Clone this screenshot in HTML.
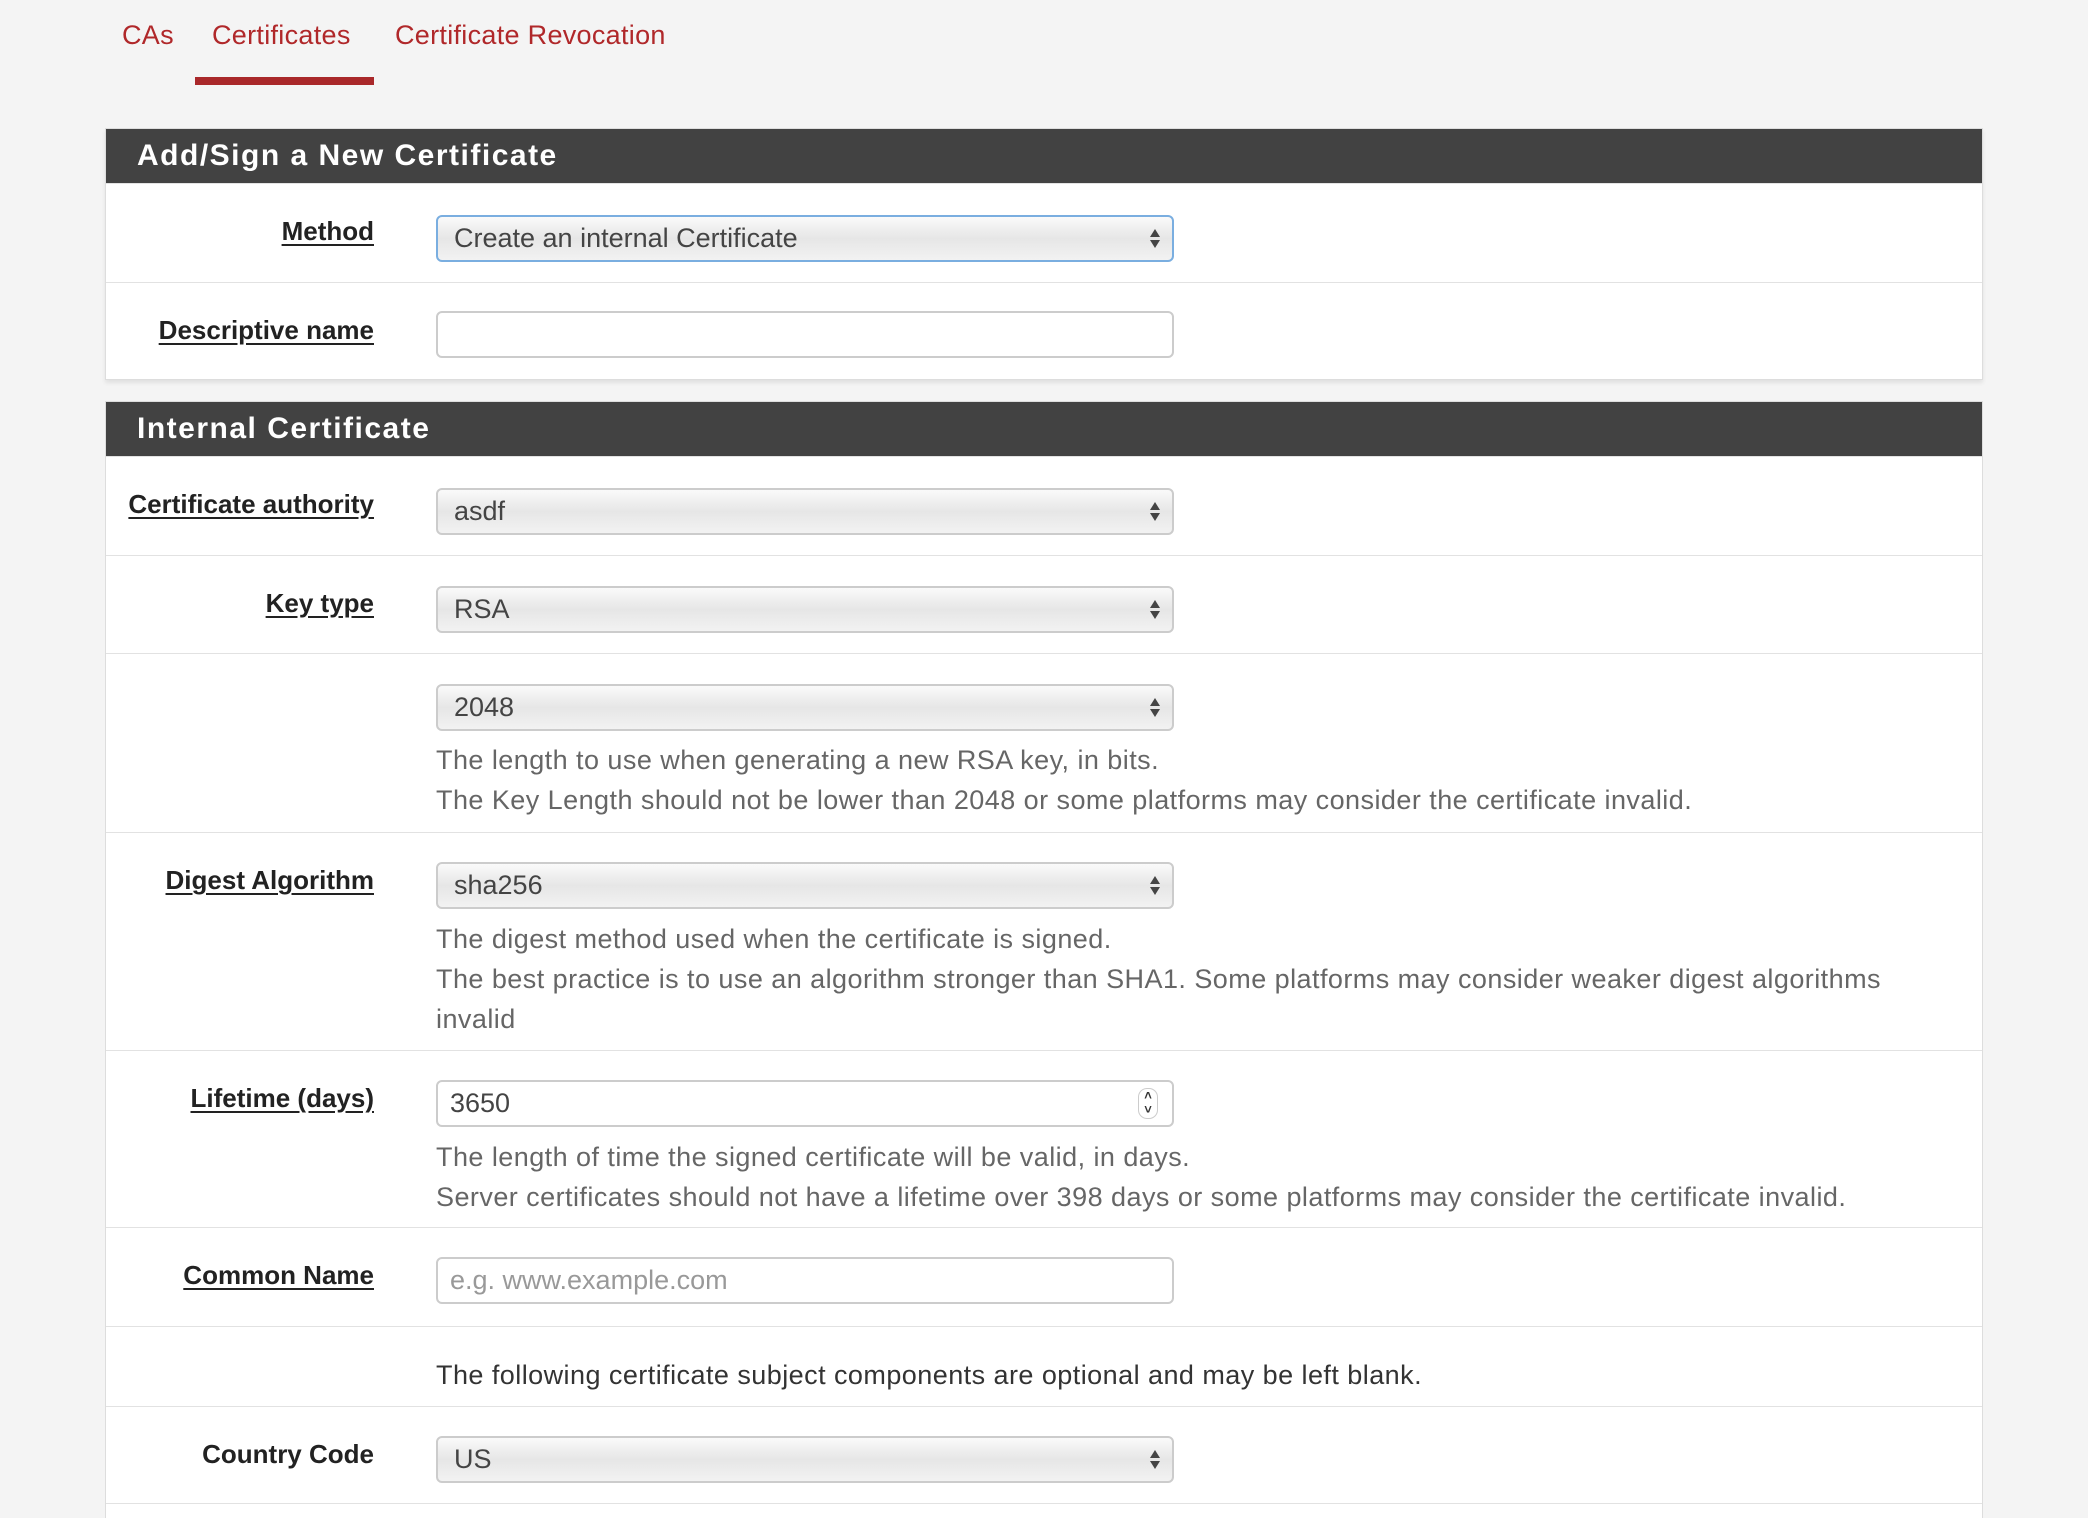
<!DOCTYPE html>
<html><head><meta charset="utf-8"><style>
*{box-sizing:border-box;margin:0;padding:0}
html{width:2088px;height:1518px;overflow:hidden}
body{width:2088px;height:1518px;background:#f4f4f4;font-family:"Liberation Sans",sans-serif;color:#333;position:relative;overflow:hidden}
.tab{position:absolute;top:20px;font-size:27px;letter-spacing:0.3px;color:#b0282a}
.ul{position:absolute;left:195px;top:77px;width:179px;height:8px;background:#a9282a}
.panel{position:absolute;left:105px;width:1878px;background:#fff;border:1px solid #ddd;overflow:hidden}
.hdr{background:#424242;color:#fff;font-weight:bold;font-size:30px;letter-spacing:1.5px;padding-left:31px;height:54px;line-height:54px}
.row{position:relative;border-top:1px solid #e2e2e2}
.row:first-of-type{border-top:none}
.lbl{position:absolute;right:1608px;font-size:26px;font-weight:bold;color:#222;text-decoration:underline;text-underline-offset:4px}
.nu{text-decoration:none}
.sel,.inp{position:absolute;left:330px;width:738px;height:47px;border:2px solid #ccc;border-radius:6px;font-size:27px;padding-left:16px;line-height:43px;color:#444}
.sel{background:linear-gradient(#fafafa,#e6e6e6 50%,#f2f2f2)}
.sel::after{content:"";position:absolute;right:12px;top:12px;width:0;height:0;border-left:5px solid transparent;border-right:5px solid transparent;border-bottom:8px solid #444}
.sel::before{content:"";position:absolute;right:12px;top:23px;width:0;height:0;border-left:5px solid transparent;border-right:5px solid transparent;border-top:8px solid #444}
.inp{background:#fff;padding-left:12px}
.help{position:absolute;left:330px;font-size:27px;letter-spacing:0.45px;color:#666;line-height:40px;white-space:nowrap}
</style></head><body>
<div class="tab" style="left:122px">CAs</div>
<div class="tab" style="left:212px">Certificates</div>
<div class="tab" style="left:395px">Certificate Revocation</div>
<div class="ul"></div>

<div class="panel" style="top:128px;height:252px;box-shadow:0 3px 4px rgba(0,0,0,.08)">
<div class="hdr">Add/Sign a New Certificate</div>
<div class="row" style="height:99px"><div class="lbl" style="top:32px">Method</div><div class="sel" style="top:31px;border-color:#7aaee0">Create an internal Certificate</div></div>
<div class="row" style="height:98px"><div class="lbl" style="top:32px">Descriptive name</div><div class="inp" style="top:28px"></div></div>
</div>

<div class="panel" style="top:401px;height:1117px;border-bottom:none">
<div class="hdr">Internal Certificate</div>
<div class="row" style="height:99px"><div class="lbl" style="top:32px">Certificate authority</div><div class="sel" style="top:31px">asdf</div></div>
<div class="row" style="height:98px"><div class="lbl" style="top:32px">Key type</div><div class="sel" style="top:30px">RSA</div></div>
<div class="row" style="height:179px"><div class="sel" style="top:30px">2048</div>
<div class="help" style="top:86px">The length to use when generating a new RSA key, in bits.<br>The Key Length should not be lower than 2048 or some platforms may consider the certificate invalid.</div></div>
<div class="row" style="height:218px"><div class="lbl" style="top:32px">Digest Algorithm</div><div class="sel" style="top:29px">sha256</div>
<div class="help" style="top:86px">The digest method used when the certificate is signed.<br>The best practice is to use an algorithm stronger than SHA1. Some platforms may consider weaker digest algorithms<br>invalid</div></div>
<div class="row" style="height:177px"><div class="lbl" style="top:32px">Lifetime (days)</div><div class="inp" style="top:29px">3650<span style="position:absolute;right:14px;top:6px;width:20px;height:31px;border:1px solid #ccc;border-radius:9px;font-size:13px;line-height:14px;color:#333;text-align:center;font-weight:bold">&#708;<br>&#709;</span></div>
<div class="help" style="top:86px">The length of time the signed certificate will be valid, in days.<br>Server certificates should not have a lifetime over 398 days or some platforms may consider the certificate invalid.</div></div>
<div class="row" style="height:99px"><div class="lbl" style="top:32px">Common Name</div><div class="inp" style="top:29px;color:#999">e.g. www.example.com</div></div>
<div class="row" style="height:80px"><div class="help" style="top:28px;color:#333">The following certificate subject components are optional and may be left blank.</div></div>
<div class="row" style="height:97px"><div class="lbl nu" style="top:32px">Country Code</div><div class="sel" style="top:29px">US</div></div>
<div class="row" style="height:14px"></div>
</div>
</body></html>
